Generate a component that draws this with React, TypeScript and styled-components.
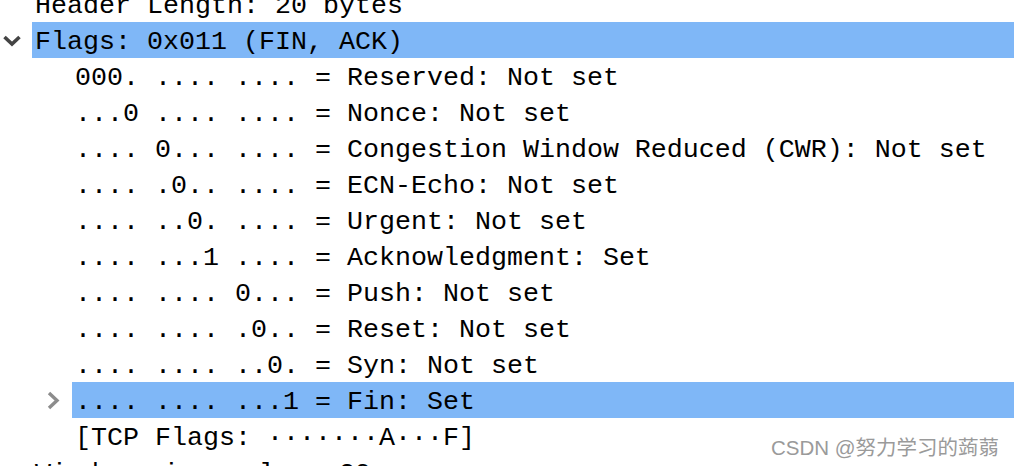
import React from "react";
import styled, { createGlobalStyle } from "styled-components";

const Global = createGlobalStyle`
  html, body { margin: 0; padding: 0; background: #ffffff; overflow: hidden; }
  #root { width: 1014px; height: 466px; overflow: hidden; position: relative; }
`;

const Tree = styled.div`
  margin-top: -14px;
  font-family: "Liberation Mono", "DejaVu Sans Mono", monospace;
  font-size: 26.67px;
  color: #000;
`;

const Row = styled.div<{ $depth: number }>`
  display: flex;
  height: 36px;
  padding-left: ${(p) => p.$depth * 40}px;
`;

const Toggle = styled.div`
  width: 32px;
  flex: 0 0 32px;
  display: flex;
  align-items: center;
`;

const Label = styled.div<{ $selected?: boolean }>`
  flex: 1;
  height: 36px;
  line-height: 36px;
  padding: 2px 3px 0;
  box-sizing: border-box;
  white-space: pre;
  background: ${(p) => (p.$selected ? "#7fb7f7" : "transparent")};
`;

const Watermark = styled.div`
  position: absolute;
  right: 15px;
  bottom: 5px;
  font-family: "Liberation Sans", "Noto Sans CJK SC", sans-serif;
  font-size: 20.5px;
  color: #9a9a9a;
  white-space: nowrap;
`;

const ChevronDown = () => (
  <svg width="32" height="36" viewBox="0 0 32 36" style={{ display: "block" }}>
    <polyline points="4.5,15 12,22 19.5,15" fill="none" stroke="#444" strokeWidth="3.6" />
  </svg>
);

const ChevronRight = () => (
  <svg width="32" height="36" viewBox="0 0 32 36" style={{ display: "block" }}>
    <polyline points="9,11 17,18.5 9,26" fill="none" stroke="#8c8c8c" strokeWidth="3.4" />
  </svg>
);

type Item = { depth: number; text: string; toggle?: "open" | "closed"; selected?: boolean };

const items: Item[] = [
  { depth: 0, text: "Header Length: 20 bytes" },
  { depth: 0, text: "Flags: 0x011 (FIN, ACK)", toggle: "open", selected: true },
  { depth: 1, text: "000. .... .... = Reserved: Not set" },
  { depth: 1, text: "...0 .... .... = Nonce: Not set" },
  { depth: 1, text: ".... 0... .... = Congestion Window Reduced (CWR): Not set" },
  { depth: 1, text: ".... .0.. .... = ECN-Echo: Not set" },
  { depth: 1, text: ".... ..0. .... = Urgent: Not set" },
  { depth: 1, text: ".... ...1 .... = Acknowledgment: Set" },
  { depth: 1, text: ".... .... 0... = Push: Not set" },
  { depth: 1, text: ".... .... .0.. = Reset: Not set" },
  { depth: 1, text: ".... .... ..0. = Syn: Not set" },
  { depth: 1, text: ".... .... ...1 = Fin: Set", toggle: "closed", selected: true },
  { depth: 1, text: "[TCP Flags: ·······A···F]" },
  { depth: 0, text: "Window size value: 29" },
];

export default function App() {
  return (
    <>
      <Global />
      <Tree>
        {items.map((it, i) => (
          <Row key={i} $depth={it.depth}>
            <Toggle>
              {it.toggle === "open" && <ChevronDown />}
              {it.toggle === "closed" && <ChevronRight />}
            </Toggle>
            <Label $selected={it.selected}>{it.text}</Label>
          </Row>
        ))}
      </Tree>
      <Watermark>CSDN @努力学习的蒟蒻</Watermark>
    </>
  );
}
